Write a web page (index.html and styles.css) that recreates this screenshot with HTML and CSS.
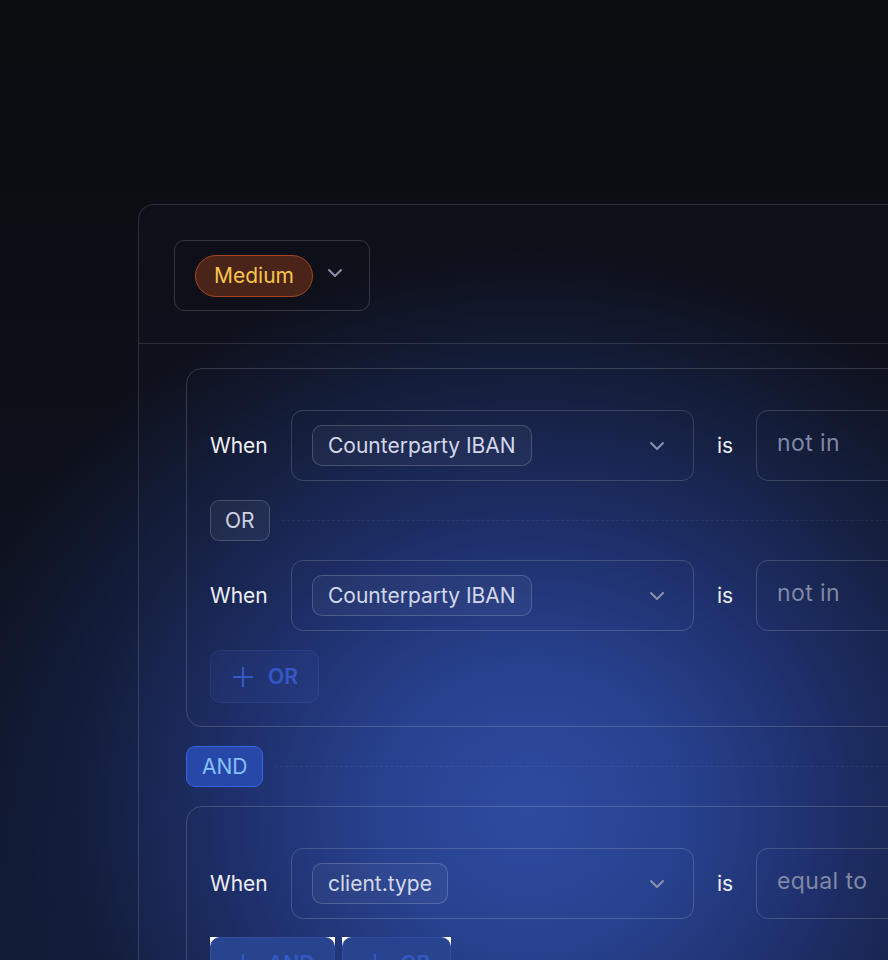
FILE: index.html
```html
<!DOCTYPE html>
<html lang="en">
<head>
    <meta charset="UTF-8">
    <meta name="viewport" content="width=device-width, initial-scale=1.0">
    <title>Rule builder</title>
    <link rel="stylesheet" href="styles.css">
</head>
<body>
    <div class="card">
        <div class="card-head">
            <div class="severity-select">
                <span class="severity-pill">Medium</span>
                <svg class="chevron" width="20" height="20" viewBox="0 0 20 20"><polyline points="4,7 10,13 16,7"/></svg>
            </div>
        </div>

        <div class="card-body">
            <div class="group">
                <div class="cond-row">
                    <span class="when">When</span>
                    <div class="field-select">
                        <span class="field-pill">Counterparty IBAN</span>
                        <svg class="chevron" width="20" height="20" viewBox="0 0 20 20"><polyline points="4,7 10,13 16,7"/></svg>
                    </div>
                    <span class="is">is</span>
                    <div class="op-select">not in</div>
                </div>

                <div class="sep">
                    <span class="badge-or">OR</span>
                    <span class="dash"></span>
                </div>

                <div class="cond-row">
                    <span class="when">When</span>
                    <div class="field-select">
                        <span class="field-pill">Counterparty IBAN</span>
                        <svg class="chevron" width="20" height="20" viewBox="0 0 20 20"><polyline points="4,7 10,13 16,7"/></svg>
                    </div>
                    <span class="is">is</span>
                    <div class="op-select">not in</div>
                </div>

                <div class="actions">
                    <button class="add-btn">
                        <svg width="22" height="22" viewBox="0 0 22 22"><path d="M11 1v20M1 11h20"/></svg>
                        OR
                    </button>
                </div>
            </div>

            <div class="sep outer">
                <span class="badge-and">AND</span>
                <span class="dash"></span>
            </div>

            <div class="group">
                <div class="cond-row">
                    <span class="when">When</span>
                    <div class="field-select">
                        <span class="field-pill">client.type</span>
                        <svg class="chevron" width="20" height="20" viewBox="0 0 20 20"><polyline points="4,7 10,13 16,7"/></svg>
                    </div>
                    <span class="is">is</span>
                    <div class="op-select">equal to</div>
                </div>

                <div class="actions">
                    <span class="clip-btn">
                        <button class="add-btn solid">
                            <svg width="22" height="22" viewBox="0 0 22 22"><path d="M11 1v20M1 11h20"/></svg>
                            AND
                        </button>
                    </span>
                    <span class="clip-btn">
                        <button class="add-btn solid">
                            <svg width="22" height="22" viewBox="0 0 22 22"><path d="M11 1v20M1 11h20"/></svg>
                            OR
                        </button>
                    </span>
                </div>
            </div>
        </div>
    </div>
</body>
</html>
```

FILE: styles.css
```css
/* Page */
body {
    margin: 0;
    height: 960px;
    overflow: hidden;
    box-sizing: border-box;
    padding: 204px 0 0 138px;
    font-family: 'Inter', 'Noto Sans', sans-serif;
    color: #e9ecf4;
    background-color: #0a0c10;
    background-image:
        radial-gradient(ellipse 600px 560px at 530px 810px, #2c4a9f 0%, #26418e 25%, #1c2e68 50%, #131d3c 75%, rgba(10, 12, 16, 0) 100%),
        linear-gradient(180deg, #0a0c10 0%, #0c0f17 40%, #121a30 100%);
}

.card {
    width: 900px;
    height: 800px;
    border: 1px solid rgba(255, 255, 255, 0.14);
    border-radius: 16px;
    background-color: rgba(120, 140, 220, 0.025);
}

.card-head {
    padding: 35px 35px 32px;
    border-bottom: 1px solid rgba(255, 255, 255, 0.12);
}

.severity-select {
    display: inline-flex;
    align-items: center;
    gap: 12px;
    height: 71px;
    width: 196px;
    box-sizing: border-box;
    padding: 0 20px;
    border: 1px solid rgba(255, 255, 255, 0.16);
    border-radius: 10px;
}

.severity-pill {
    display: inline-flex;
    align-items: center;
    height: 42px;
    box-sizing: border-box;
    padding: 0 18px;
    border: 1px solid #a3441f;
    border-radius: 21px;
    background-color: #4b2419;
    color: #f7c54c;
    font-size: 21px;
}

.chevron {
    fill: none;
    stroke: #8b8fac;
    stroke-width: 2;
    stroke-linecap: round;
    stroke-linejoin: round;
    flex-shrink: 0;
}

.severity-select .chevron {
    margin-top: -6px;
}

/* Conditions */
.card-body {
    padding: 24px 0 0 47px;
}

.group {
    border: 1px solid rgba(255, 255, 255, 0.16);
    border-radius: 16px;
    padding: 41px 0 23px 23px;
    display: flex;
    flex-direction: column;
    gap: 19px;
}

.cond-row {
    display: flex;
    align-items: center;
    height: 71px;
}

.when {
    width: 81px;
    font-size: 21px;
    color: #eef0f6;
}

.is {
    width: 62px;
    text-align: center;
    font-size: 21px;
    color: #eef0f6;
}

.field-select {
    width: 403px;
    height: 71px;
    box-sizing: border-box;
    display: flex;
    align-items: center;
    justify-content: space-between;
    padding: 0 26px 0 20px;
    border: 1px solid rgba(255, 255, 255, 0.16);
    border-radius: 12px;
}

.field-pill {
    display: inline-flex;
    align-items: center;
    height: 41px;
    box-sizing: border-box;
    padding: 0 15px;
    border: 1px solid rgba(255, 255, 255, 0.18);
    border-radius: 10px;
    background-color: rgba(255, 255, 255, 0.04);
    color: #d3d8ea;
    font-size: 21px;
}

.op-select {
    width: 200px;
    height: 71px;
    box-sizing: border-box;
    display: flex;
    align-items: center;
    padding: 0 0 5px 20px;
    border: 1px solid rgba(255, 255, 255, 0.16);
    border-radius: 12px;
    color: #8088a6;
    font-size: 23px;
    letter-spacing: 0.4px;
}

.sep {
    display: flex;
    align-items: center;
}

.sep.outer {
    margin: 19px 0;
}

.dash {
    flex: 1;
    margin-left: 12px;
    border-top: 1px dashed rgba(255, 255, 255, 0.06);
}

.badge-or {
    display: inline-flex;
    align-items: center;
    height: 41px;
    box-sizing: border-box;
    padding: 0 14px;
    border: 1px solid rgba(255, 255, 255, 0.18);
    border-radius: 9px;
    background-color: rgba(255, 255, 255, 0.05);
    color: #cdd2e2;
    font-size: 21px;
}

.badge-and {
    display: inline-flex;
    align-items: center;
    height: 41px;
    box-sizing: border-box;
    padding: 0 15px;
    border: 1px solid #3566e2;
    border-radius: 9px;
    background-color: #2748a9;
    color: #86c0fb;
    font-size: 21px;
}

.actions {
    display: flex;
    gap: 7px;
}

.add-btn {
    display: inline-flex;
    align-items: center;
    gap: 14px;
    height: 53px;
    padding: 0 20px 0 21px;
    border: 1px solid rgba(80, 110, 220, 0.16);
    border-radius: 10px;
    background-color: rgba(70, 100, 210, 0.1);
    color: #3658c6;
    font-family: inherit;
    font-size: 21px;
    font-weight: 600;
    cursor: pointer;
}

.add-btn svg {
    fill: none;
    stroke: #3658c6;
    stroke-width: 2.2;
}

.clip-btn {
    display: inline-block;
    margin-top: -1px;
    background-color: #ffffff;
    line-height: 0;
}

.add-btn.solid {
    background-color: #28448f;
    border-color: #2f4ea0;
}
```
